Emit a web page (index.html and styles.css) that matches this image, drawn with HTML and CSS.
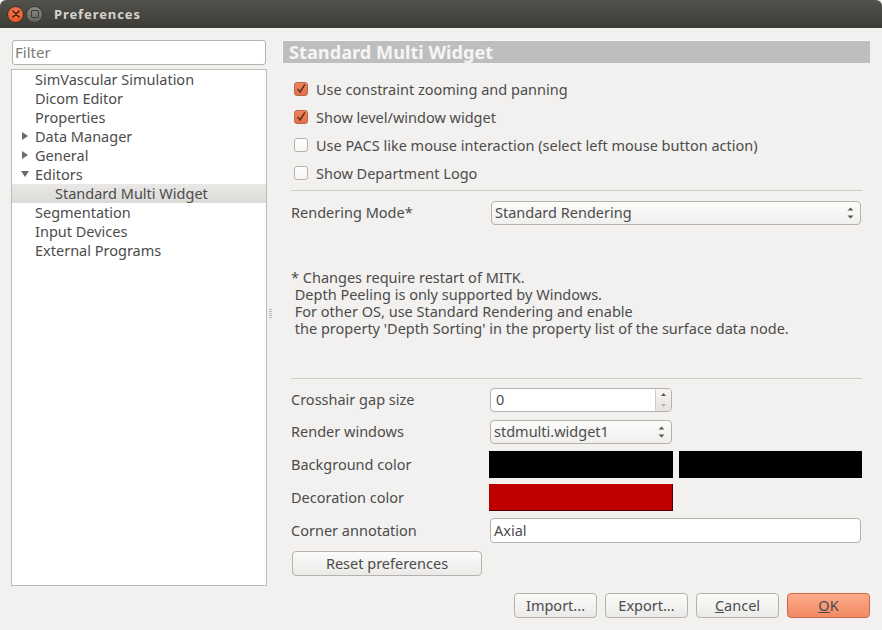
FILE: index.html
```html
<!DOCTYPE html>
<html lang="en">
<head>
<meta charset="utf-8">
<title>Preferences</title>
<link rel="stylesheet" href="styles.css">
</head>
<body>
<div class="window">
  <header class="titlebar">
    <span class="wbtn close"><svg width="10" height="10" viewBox="0 0 10 10"><path d="M2 2L8 8M8 2L2 8" stroke="#4a1a08" stroke-width="1.6" stroke-linecap="round"/></svg></span>
    <span class="wbtn max"><span class="maxbox"></span></span>
    <span class="wtitle">Preferences</span>
  </header>
  <div class="main">
    <aside class="left">
      <div class="filter">Filter</div>
      <ul class="tree">
        <li class="node">SimVascular Simulation</li>
        <li class="node">Dicom Editor</li>
        <li class="node">Properties</li>
        <li class="node"><svg class="arrow" width="8" height="10" viewBox="0 0 8 10"><path d="M1 1L7 5L1 9Z" fill="#6e6a64"/></svg>Data Manager</li>
        <li class="node"><svg class="arrow" width="8" height="10" viewBox="0 0 8 10"><path d="M1 1L7 5L1 9Z" fill="#6e6a64"/></svg>General</li>
        <li class="node"><svg class="arrow down" width="10" height="8" viewBox="0 0 10 8"><path d="M1 1L9 1L5 7Z" fill="#6e6a64"/></svg>Editors</li>
        <li class="node child selected">Standard Multi Widget</li>
        <li class="node">Segmentation</li>
        <li class="node">Input Devices</li>
        <li class="node">External Programs</li>
      </ul>
    </aside>
    <div class="splitter"><i></i><i></i><i></i><i></i><i></i></div>
    <section class="right">
      <h1 class="heading">Standard Multi Widget</h1>
      <div class="checks">
        <div class="check"><span class="box on"><svg width="14" height="14" viewBox="0 0 14 14"><path d="M3 7L6 10.5L11.5 1.5" fill="none" stroke="#5a3020" stroke-width="1.8"/></svg></span>Use constraint zooming and panning</div>
        <div class="check"><span class="box on"><svg width="14" height="14" viewBox="0 0 14 14"><path d="M3 7L6 10.5L11.5 1.5" fill="none" stroke="#5a3020" stroke-width="1.8"/></svg></span>Show level/window widget</div>
        <div class="check"><span class="box"></span>Use PACS like mouse interaction (select left mouse button action)</div>
        <div class="check"><span class="box"></span>Show Department Logo</div>
      </div>
      <hr class="rule rule-one">
      <div class="row mode-row">
        <span class="label raised">Rendering Mode*</span>
        <div class="combo combo-wide">Standard Rendering<svg class="updown" width="7" height="12" viewBox="0 0 7 12"><path d="M3.5 0.5L6.5 3.5H0.5ZM3.5 11.5L6.5 8.5H0.5Z" fill="#5a5650"/></svg></div>
      </div>
      <p class="note">* Changes require restart of MITK.<br>&nbsp;Depth Peeling is only supported by Windows.<br>&nbsp;For other OS, use Standard Rendering and enable<br>&nbsp;the property 'Depth Sorting' in the property list of the surface data node.</p>
      <hr class="rule rule-two">
      <div class="row spin-row">
        <span class="label raised">Crosshair gap size</span>
        <div class="spin"><span class="spinval">0</span><span class="spinbtns"><svg width="7" height="20" viewBox="0 0 7 20"><path d="M3.5 3L6 6H1Z" fill="#5a5650"/><path d="M3.5 17L6 14H1Z" fill="#b5b2ac"/></svg></span></div>
      </div>
      <div class="row combo-row">
        <span class="label raised">Render windows</span>
        <div class="combo combo-narrow">stdmulti.widget1<svg class="updown" width="7" height="12" viewBox="0 0 7 12"><path d="M3.5 0.5L6.5 3.5H0.5ZM3.5 11.5L6.5 8.5H0.5Z" fill="#5a5650"/></svg></div>
      </div>
      <div class="row color-row">
        <span class="label">Background color</span>
        <div class="swatches"><span class="swatch black"></span><span class="swatch black second"></span></div>
      </div>
      <div class="row color-row red-row">
        <span class="label">Decoration color</span>
        <div class="swatches"><span class="swatch red"></span></div>
      </div>
      <div class="row edit-row">
        <span class="label">Corner annotation</span>
        <div class="edit">Axial</div>
      </div>
      <button class="btn reset">Reset preferences</button>
    </section>
  </div>
  <footer class="actions">
    <button class="btn act">Import...</button>
    <button class="btn act">Export...</button>
    <button class="btn act"><u>C</u>ancel</button>
    <button class="btn act ok"><u>O</u>K</button>
  </footer>
</div>
</body>
</html>
```
FILE: styles.css
```css
* { box-sizing: border-box; }
html, body { margin: 0; padding: 0; }
body {
  width: 882px;
  height: 630px;
  overflow: hidden;
  background: #f2f1ef;
  color: #4c4c4c;
  font-family: "Noto Sans", "Open Sans", sans-serif;
  font-size: 14.5px;
  line-height: 19px;
}
.window { width: 882px; height: 630px; display: flex; flex-direction: column; }

.titlebar {
  height: 28px;
  flex: none;
  display: flex;
  align-items: center;
  padding-left: 7px;
  background: linear-gradient(#53514b, #3c3b37);
  border-radius: 6px 6px 0 0;
}
.wbtn {
  width: 17px;
  height: 17px;
  border-radius: 50%;
  display: flex;
  align-items: center;
  justify-content: center;
  flex: none;
}
.close { background: radial-gradient(circle at 50% 35%, #f3805a, #df4a1b); border: 1px solid #3a332c; }
.max { background: linear-gradient(#8c8a84, #65635d); border: 1px solid #3a3832; margin-left: 2px; }
.maxbox { width: 8px; height: 8px; border: 1px solid #3e3c37; border-radius: 1px; }
.wtitle { margin-left: 11px; color: #d6d3cc; font-weight: 700; font-size: 13px; letter-spacing: 0.9px; }

.main { height: 558px; flex: none; display: flex; }
.left { width: 256px; margin: 12px 0 0 11px; flex: none; }
.filter {
  height: 25px;
  margin-left: 1px;
  margin-right: 1px;
  padding: 1px 2px;
  background: #fff;
  border: 1px solid #b5b2ae;
  border-radius: 3px;
  color: #7a7a78;
  font-size: 15px;
  line-height: 20px;
}
.tree {
  list-style: none;
  height: 517px;
  margin: 4px 0 0;
  padding: 0;
  background: #fff;
  border: 1px solid #bebcb8;
}
.node { height: 19px; padding-left: 23px; position: relative; white-space: nowrap; line-height: 19px; }
.child { padding-left: 43px; }
.selected { background: linear-gradient(#e9e8e6, #dcdbd8); }
.arrow { position: absolute; left: 9px; top: 4px; }
.arrow.down { left: 8px; top: 5px; }

.splitter { width: 16px; flex: none; display: flex; flex-direction: column; align-items: flex-start; justify-content: center; gap: 1px; padding: 12px 0 0 2px; }
.splitter i { width: 3px; height: 1px; background: #bdbbb6; }

.right { width: 588px; flex: none; padding-top: 12px; margin-left: -1px; }
.heading {
  height: 23px;
  margin: 0;
  padding-left: 6px;
  background: #bebebe;
  border: 1px solid #f7f7f7;
  border-width: 1px 0 0 1px;
  color: #f5f5f5;
  font-size: 18.2px;
  font-weight: 700;
  line-height: 22px;
}
.checks { margin: 12px 0 0 12px; }
.check { height: 28px; display: flex; align-items: center; white-space: nowrap; }
.box {
  width: 14px;
  height: 14px;
  margin-right: 8px;
  flex: none;
  background: linear-gradient(#fff, #f6f5f3);
  border: 1px solid #b5b2ae;
  border-radius: 3px;
  display: flex;
  align-items: center;
  justify-content: center;
}
.box.on { background: linear-gradient(#f0845f, #e36f46); border-color: #b8684c; }
.rule { height: 1px; margin: 0 8px 0 9px; border: 0; background: #cfcdc9; }
.rule-one { margin-top: 3px; }
.rule-two { margin-top: 41px; }

.row { display: flex; align-items: center; margin-left: 9px; }
.label { width: 198px; flex: none; white-space: nowrap; }
.raised { margin-bottom: 2px; }
.mode-row { margin-top: 10px; }
.combo {
  height: 24px;
  padding-left: 3px;
  position: relative;
  background: linear-gradient(#fcfcfb, #f0efed);
  border: 1px solid #b5b2ae;
  border-radius: 4px;
  line-height: 20px;
  white-space: nowrap;
}
.combo-wide { width: 370px; margin-left: 2px; }
.combo-narrow { width: 182px; margin-left: 1px; }
.updown { position: absolute; right: 6px; top: 5px; }
.note { height: 68px; margin: 44px 0 0 9px; line-height: 17px; white-space: nowrap; }
.spin-row { margin-top: 9px; }
.spin {
  width: 182px;
  height: 24px;
  margin-left: 1px;
  display: flex;
  background: #fff;
  border: 1px solid #b5b2ae;
  border-radius: 4px;
  overflow: hidden;
}
.spinval { flex: 1; padding-left: 5px; line-height: 20px; }
.spinbtns { width: 16px; flex: none; display: flex; align-items: center; justify-content: center; background: linear-gradient(#f7f6f5, #e4e3e0); border-left: 1px solid #cfcdc9; }
.combo-row { margin-top: 8px; }
.color-row { margin-top: 7px; height: 27px; }
.red-row { margin-top: 6px; }
.swatches { display: flex; gap: 6px; }
.swatch { height: 27px; width: 184px; display: block; }
.black { background: #000; }
.second { width: 183px; }
.red { background: #c00000; border-right: 1px solid #500000; border-bottom: 1px solid #500000; }
.edit-row { margin-top: 7px; }
.edit {
  width: 371px;
  height: 25px;
  margin-left: 1px;
  padding-left: 3px;
  background: #fff;
  border: 1px solid #b5b2ae;
  border-radius: 4px;
  line-height: 22px;
}
.btn {
  height: 25px;
  padding: 0 0 2px;
  background: linear-gradient(#fbfbfa, #ebeae8);
  border: 1px solid #b5b2ae;
  border-radius: 4px;
  color: #4c4c4c;
  font: inherit;
  line-height: 20px;
}
.reset { width: 190px; margin: 8px 0 0 10px; display: block; }
.actions { display: flex; justify-content: flex-end; gap: 8px; padding: 7px 12px 0 0; }
.act { width: 83px; }
.ok { background: linear-gradient(#fbab8b, #f28a63); border-color: #c8694a; }
```
